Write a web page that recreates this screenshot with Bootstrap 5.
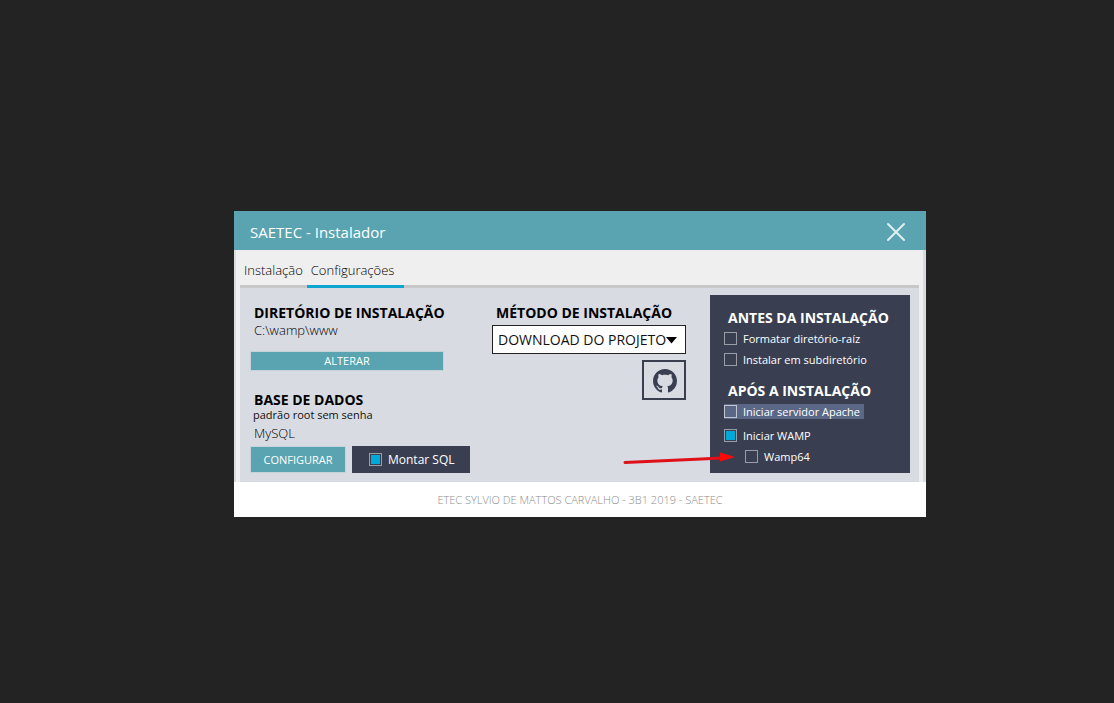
<!DOCTYPE html>
<html lang="pt-BR">
<head>
<meta charset="utf-8">
<meta name="viewport" content="width=device-width, initial-scale=1">
<title>SAETEC - Instalador</title>
<link href="https://cdn.jsdelivr.net/npm/bootstrap@5.3.0/dist/css/bootstrap.min.css" rel="stylesheet">
<style>
  :root { --teal: #5aa4b1; --navy: #393f51; --panel: #d8dbe2; --accent: #00aad8; }
  body { background: #232323; font-family: "Open Sans", "Noto Sans", sans-serif; font-size: 14px; line-height: 18px; color: #111; }
  .stage { padding: 25px 0 0 46px; }
  .installer { max-width: 692px; background: var(--panel); }
  .titlebar { background: var(--teal); color: #fff; height: 39px; padding: 2px 20px 0 16px; }
  .titlebar h1 { font-size: 15px; line-height: 20px; font-weight: 400; }
  .close-btn { width: 20px; height: 20px; }
  .shell { background: #efefef; margin: 0 3px 0 2px; padding: 0 4px; }
  .tabs { border-bottom: 3px solid #c8c8c8; height: 38px; }
  .tabs .nav-link { color: #000; font-size: 13px; font-weight: 300; padding: 11px 4px 0; height: 38px; border-bottom: 3px solid transparent; }
  .tabs .nav-link.active { border-color: #10a5d0; padding-right: 10px; }
  .tab-body { background: var(--panel); padding: 7px 9px 9px 10px; }
  .col-dir { padding-top: 9px; }
  .col-method { width: 194px; padding-top: 9px; margin-right: 24px; }
  .heading { font-size: 14px; line-height: 18px; font-weight: 700; color: #000; margin: 0; padding-left: 4px; }
  .value { font-weight: 300; padding-left: 4px; line-height: 16px; font-size: 13px; color: #000; }
  .value.db { margin: 4px 0 5px; }
  .hint { font-size: 11px; line-height: 12px; padding-left: 3px; }
  .btn-flat { background: var(--teal); color: #fff; border: 1px solid #c5d3da; border-radius: 0; font-size: 11px; line-height: 18px; padding: 0; }
  .btn-change { width: 194px; height: 20px; margin: 13px 0 20px; }
  .btn-config { width: 96px; height: 27px; margin-right: 6px; }
  .opt { color: #fff; font-size: 11px; line-height: 15px; gap: 6px; }
  .opt input { appearance: none; width: 13px; height: 13px; margin: 0; border: 1px solid #9a9da5; background: transparent; flex: none; }
  .opt input:checked { background: var(--accent); box-shadow: inset 0 0 0 1px var(--navy); }
  .opt.sql-box { background: var(--navy); width: 118px; height: 27px; padding-left: 17px; font-size: 12px; }
  .opt.hot { background: #5b6786; padding-right: 4px; margin-bottom: 3px; }
  .opt.hot input { border-color: #c3c7d2; }
  .opt.sub { margin-left: 21px; }
  .opt-list { gap: 6px; margin: 3px 0 14px; }
  .method-wrap { height: 29px; margin: 3px 0 6px; }
  .method-wrap select { appearance: none; width: 100%; height: 100%; border: 1px solid #222; border-radius: 0; background: #fff; color: #111; font-size: 14px; padding: 1px 0 0 5px; }
  .method-wrap svg { right: 9px; top: 12px; pointer-events: none; }
  .btn-git { width: 44px; height: 40px; border: 2px solid var(--navy); border-radius: 0; color: var(--navy); padding: 2px 0 0 2px; }
  .options { background: var(--navy); width: 200px; height: 178px; padding: 13px 14px 0; }
  .options .heading { color: #fff; line-height: 20px; }
  .arrow { left: 382px; top: 159px; pointer-events: none; }
  .foot { background: #fff; color: #8c8c8c; height: 35px; font-size: 11px; font-weight: 300; }
</style>
</head>
<body>
<div class="stage min-vh-100 d-flex align-items-center justify-content-center">
  <main class="installer w-100">
    <header class="titlebar d-flex align-items-center justify-content-between">
      <h1 class="m-0">SAETEC - Instalador</h1>
      <button type="button" class="close-btn btn p-0 border-0 d-flex" aria-label="Fechar">
        <svg width="20" height="20" viewBox="0 0 20 20" stroke="#dff0f0" stroke-width="2" stroke-linecap="round"><path d="M2 2l16 16M18 2L2 18"/></svg>
      </button>
    </header>
    <div class="shell">
      <nav class="tabs d-flex">
        <a class="nav-link" href="#instalacao">Instalação</a>
        <a class="nav-link active" href="#config" aria-current="page">Configurações</a>
      </nav>
      <div class="tab-body d-flex position-relative" id="config">
        <section class="col-dir flex-grow-1">
          <h2 class="heading">DIRETÓRIO DE INSTALAÇÃO</h2>
          <div class="value">C:\wamp\www</div>
          <button type="button" class="btn btn-flat btn-change d-block">ALTERAR</button>
          <h2 class="heading">BASE DE DADOS</h2>
          <div class="hint">padrão root sem senha</div>
          <div class="value db">MySQL</div>
          <div class="d-flex">
            <button type="button" class="btn btn-flat btn-config">CONFIGURAR</button>
            <label class="opt sql-box d-flex align-items-center"><input type="checkbox" checked>Montar SQL</label>
          </div>
        </section>
        <section class="col-method">
          <h2 class="heading"><label for="metodo">MÉTODO DE INSTALAÇÃO</label></h2>
          <div class="method-wrap position-relative">
            <select id="metodo"><option>DOWNLOAD DO PROJETO</option></select>
            <svg class="position-absolute" width="11" height="7" viewBox="0 0 11 7"><path d="M0 0h11L5.500 6.500z"/></svg>
          </div>
          <button type="button" class="btn btn-git d-flex align-items-center justify-content-center ms-auto" aria-label="GitHub">
            <svg width="24" height="24" viewBox="0 0 16 16" fill="currentColor"><path d="M8 0C3.580 0 0 3.580 0 8c0 3.540 2.290 6.530 5.470 7.590.4.070.55-.17.55-.38 0-.19-.01-.82-.01-1.490-2.010.37-2.530-.49-2.690-.94-.09-.23-.48-.94-.82-1.130-.28-.15-.68-.52-.01-.53.63-.01 1.080.58 1.230.82.72 1.210 1.870.87 2.330.66.070-.52.28-.87.51-1.070-1.780-.2-3.640-.89-3.640-3.950 0-.87.31-1.590.82-2.150-.08-.2-.36-1.020.08-2.120 0 0 .67-.21 2.200.82.64-.18 1.320-.27 2-.27s1.360.09 2 .27c1.530-1.040 2.200-.82 2.200-.82.44 1.100.16 1.920.08 2.120.51.56.82 1.270.82 2.150 0 3.070-1.870 3.750-3.650 3.950.29.25.54.73.54 1.480 0 1.070-.01 1.930-.01 2.200 0 .21.15.46.55.38A8.010 8.010 0 0 0 16 8c0-4.420-3.580-8-8-8z"/></svg>
          </button>
        </section>
        <section class="options">
          <h2 class="heading">ANTES DA INSTALAÇÃO</h2>
          <div class="opt-list d-flex flex-column align-items-start">
            <label class="opt d-flex align-items-center"><input type="checkbox">Formatar diretório-raíz</label>
            <label class="opt d-flex align-items-center"><input type="checkbox">Instalar em subdiretório</label>
          </div>
          <h2 class="heading">APÓS A INSTALAÇÃO</h2>
          <div class="opt-list d-flex flex-column align-items-start mb-0">
            <label class="opt hot d-flex align-items-center"><input type="checkbox">Iniciar servidor Apache</label>
            <label class="opt d-flex align-items-center"><input type="checkbox" checked>Iniciar WAMP</label>
            <label class="opt sub d-flex align-items-center"><input type="checkbox">Wamp64</label>
          </div>
        </section>
        <svg class="arrow position-absolute" width="114" height="20" viewBox="0 0 114 20"><path d="M3 15.500L101 11" stroke="#e01018" stroke-width="3" stroke-linecap="round"/><path d="M98 5.500L113 10L98 14.500z" fill="#ff0808"/></svg>
      </div>
    </div>
    <footer class="foot d-flex align-items-center justify-content-center">ETEC SYLVIO DE MATTOS CARVALHO - 3B1 2019 - SAETEC</footer>
  </main>
</div>
<script src="https://cdn.jsdelivr.net/npm/bootstrap@5.3.0/dist/js/bootstrap.bundle.min.js"></script>
</body>
</html>
